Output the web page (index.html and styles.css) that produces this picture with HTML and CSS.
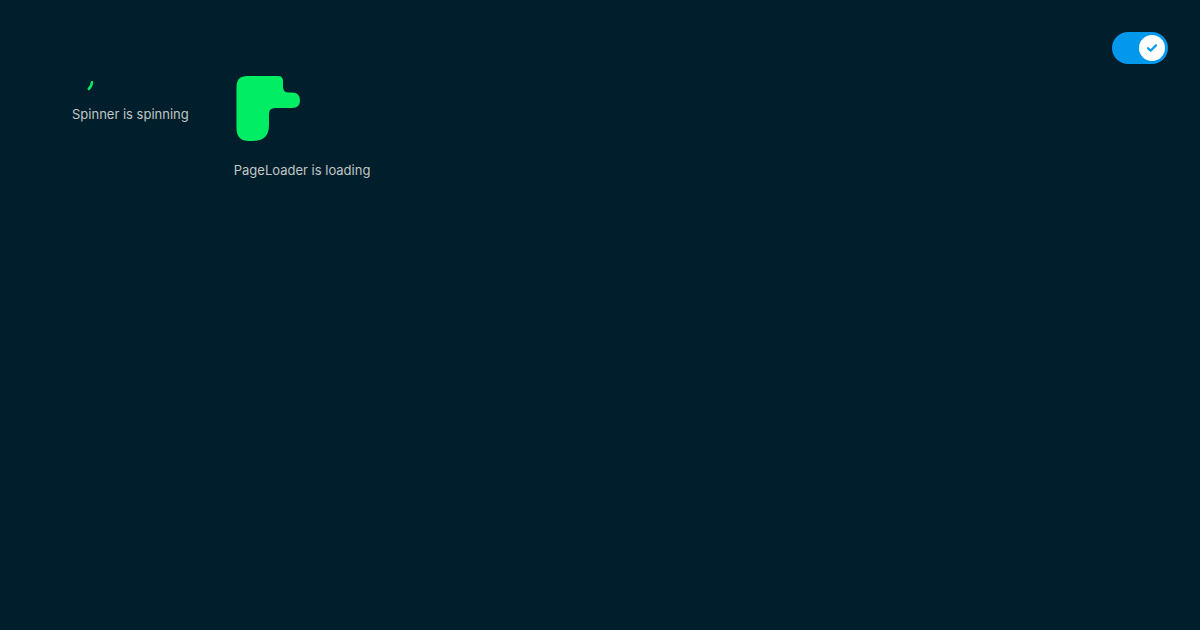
FILE: index.html
```html
<!DOCTYPE html>
<html lang="en">
<head>
    <meta charset="UTF-8">
    <title>Loaders</title>
    <link rel="stylesheet" href="styles.css">
</head>
<body>

<div class="topbar">
    <button class="toggle toggle-on" aria-checked="true" role="switch">
        <span class="toggle-knob">
            <svg width="14" height="14" viewBox="0 0 14 14">
                <path d="M3 7.2l2.6 2.6L11 4.4" fill="none" stroke="#0498ec" stroke-width="2.2" stroke-linecap="round" stroke-linejoin="round"/>
            </svg>
        </span>
    </button>
</div>

<div class="demo">
    <!--spinner-->
    <div class="demo-item">
        <div class="spinner">
            <svg width="40" height="40" viewBox="0 0 40 40">
                <path d="M20 18.2 Q19.7 22.5 16.7 25" fill="none" stroke="#00ed64" stroke-width="2.4" stroke-linecap="round"/>
            </svg>
        </div>
        <p class="demo-label">Spinner is spinning</p>
    </div>

    <!--page loader-->
    <div class="demo-item">
        <div class="page-loader">
            <svg width="72" height="94" viewBox="0 0 72 94">
                <path d="M2.5 23 Q2.5 12 13 12 H44 Q49 12 49 17 V23 Q49 28.5 55 28.5 H58 Q66 28.5 66 36.5 Q66 44 58 44 H41 Q35 44 35 50 V61 Q35 77 19 77 H15 Q2.5 77 2.5 64 Z" fill="#00ed64"/>
            </svg>
        </div>
        <p class="demo-label demo-label-page">PageLoader is loading</p>
    </div>
</div>

</body>
</html>
```

FILE: styles.css
```css
* {
    margin: 0;
    padding: 0;
    box-sizing: border-box;
}

body {
    background-color: #001e2b;
    font-family: Inter, "Noto Sans", sans-serif;
    color: #c1c7c6;
    height: 630px;
}

/*右上角的开关*/
.topbar {
    display: flex;
    justify-content: flex-end;
    padding: 32px 32px 0;
}

.toggle {
    width: 56px;
    height: 32px;
    border: none;
    border-radius: 16px;
    background-color: #0498ec;
    display: flex;
    align-items: center;
    justify-content: flex-end;
    padding: 0 3px;
    cursor: pointer;
}

.toggle-knob {
    width: 26px;
    height: 26px;
    border-radius: 50%;
    background-color: #fff;
    display: flex;
    align-items: center;
    justify-content: center;
}

/*演示区域*/
.demo {
    display: flex;
    align-items: flex-start;
    gap: 45px;
    padding-left: 72px;
}

.demo-item {
    display: flex;
    flex-direction: column;
}

.spinner {
    width: 40px;
    height: 40px;
}

.spinner svg,
.page-loader svg {
    display: block;
}

.demo-label {
    font-size: 13px;
    line-height: 16px;
    margin-top: 2px;
    white-space: nowrap;
}

.demo-label-page {
    margin-top: 4px;
}
```
